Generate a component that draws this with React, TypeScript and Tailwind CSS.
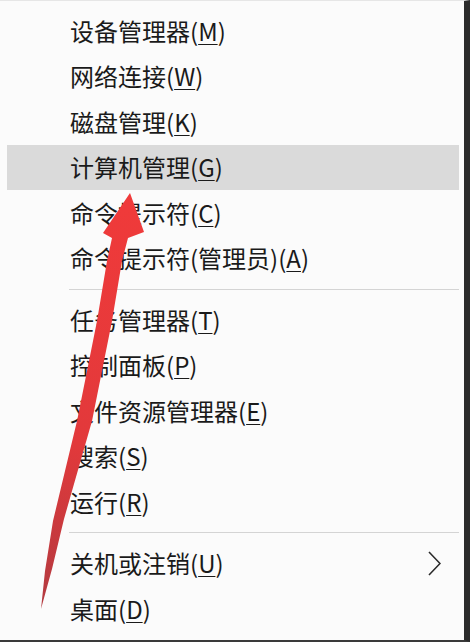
import React from "react";

type Item = { label: string; k: string; active?: boolean; sub?: boolean };

const groups: Item[][] = [
  [
    { label: "设备管理器", k: "M" },
    { label: "网络连接", k: "W" },
    { label: "磁盘管理", k: "K" },
    { label: "计算机管理", k: "G", active: true },
    { label: "命令提示符", k: "C" },
    { label: "命令提示符(管理员)", k: "A" },
  ],
  [
    { label: "任务管理器", k: "T" },
    { label: "控制面板", k: "P" },
    { label: "文件资源管理器", k: "E" },
    { label: "搜索", k: "S" },
    { label: "运行", k: "R" },
  ],
  [
    { label: "关机或注销", k: "U", sub: true },
    { label: "桌面", k: "D" },
  ],
];

const Row = ({ item }: { item: Item }) => (
  <div
    className={`h-[45.5px] flex items-center justify-between pl-[63px] pr-[18px] ${
      item.active ? "bg-[#dadada]" : ""
    }`}
  >
    <span className="text-[24px] leading-none text-[#1a1a1a]">
      {item.label}(
      <span className="underline decoration-1 underline-offset-[3px]">{item.k}</span>)
    </span>
    {item.sub && (
      <svg width="13" height="25" viewBox="0 0 13 25" fill="none">
        <polyline points="1,1 12,12.5 1,24" stroke="#2a2a2a" strokeWidth="1.6" />
      </svg>
    )}
  </div>
);

const Arrow = () => (
  <svg
    className="absolute inset-0 pointer-events-none"
    width="470"
    height="642"
    viewBox="0 0 470 642"
  >
    <defs>
      <linearGradient id="red" x1="130" y1="192" x2="41" y2="608" gradientUnits="userSpaceOnUse">
        <stop offset="0" stopColor="#f03a3a" />
        <stop offset="0.6" stopColor="#e2393b" />
        <stop offset="1" stopColor="#b23a40" />
      </linearGradient>
    </defs>
    <polygon
      fill="url(#red)"
      points="130,192 144,231 128,237 122,260 112,320 92,420 64,518 52,568 41,608 45,570 53,520 77,420 97,320 107,260 112,237 103,232"
    />
  </svg>
);

export default function App() {
  return (
    <div className="relative w-[470px] h-[642px] bg-[#fbfbfb] border-t border-t-[#e6e6e6] border-r-[6px] border-r-[#2b2b2b] border-b-2 border-b-[#3a3a3a] font-['Noto_Sans_CJK_SC',sans-serif] overflow-hidden">
      <div className="pt-[7px] pl-[7px] pr-[5px]">
        {groups.map((g, gi) => (
          <div key={gi}>
            {gi > 0 && (
              <div className="h-[16px] flex items-center pl-[62px]">
                <div className="h-px w-full bg-[#d4d4d4]" />
              </div>
            )}
            {g.map((it) => (
              <Row key={it.label} item={it} />
            ))}
          </div>
        ))}
      </div>
      <Arrow />
    </div>
  );
}
